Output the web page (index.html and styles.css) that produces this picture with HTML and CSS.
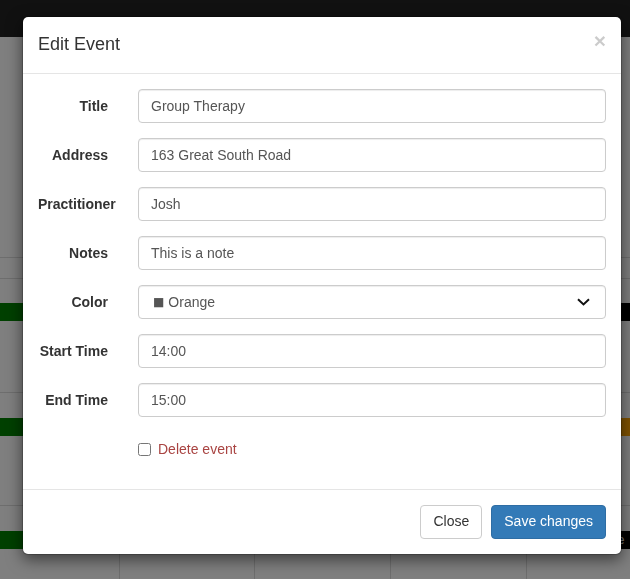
FILE: index.html
```html
<!DOCTYPE html>
<html lang="en">
<head>
<meta charset="utf-8">
<title>Edit Event</title>
<link rel="stylesheet" href="styles.css">
</head>
<body>
<div class="page">
  <div class="navbar"></div>
  <div class="calendar">
    <div class="cal-row row-a">
      <div class="cell"></div><div class="cell"></div><div class="cell"></div><div class="cell"></div><div class="cell"></div>
    </div>
    <div class="cal-row row-b">
      <div class="cell"></div><div class="cell"></div><div class="cell"></div><div class="cell"></div><div class="cell"></div>
    </div>
    <div class="cal-row row-c">
      <div class="cell"><div class="event ev-green"></div></div>
      <div class="cell"></div><div class="cell"></div><div class="cell"></div>
      <div class="cell"><div class="event ev-black"></div></div>
    </div>
    <div class="cal-row row-d">
      <div class="cell"><div class="event ev-green"></div></div>
      <div class="cell"></div><div class="cell"></div><div class="cell"></div>
      <div class="cell"><div class="event ev-orange"></div></div>
    </div>
    <div class="cal-row row-e">
      <div class="cell"><div class="event ev-green"></div></div>
      <div class="cell"></div><div class="cell"></div><div class="cell"></div>
      <div class="cell"><div class="event ev-black ev-label">Review Due date</div></div>
    </div>
  </div>
</div>

<div class="backdrop"></div>

<div class="modal">
  <div class="modal-header">
    <button class="close" type="button">×</button>
    <h4 class="modal-title">Edit Event</h4>
  </div>
  <div class="modal-body">
    <form class="form">
      <div class="form-group">
        <label class="control-label">Title</label>
        <input class="form-control" type="text" value="Group Therapy">
      </div>
      <div class="form-group">
        <label class="control-label">Address</label>
        <input class="form-control" type="text" value="163 Great South Road">
      </div>
      <div class="form-group">
        <label class="control-label">Practitioner</label>
        <input class="form-control" type="text" value="Josh">
      </div>
      <div class="form-group">
        <label class="control-label">Notes</label>
        <input class="form-control" type="text" value="This is a note">
      </div>
      <div class="form-group">
        <label class="control-label">Color</label>
        <div class="form-control select" role="combobox" tabindex="0">
          <span class="swatch">■</span><span class="select-text">Orange</span>
          <svg class="chevron" width="13" height="8" viewBox="0 0 13 8"><path d="M1 1.2 L6.5 6.4 L12 1.2" fill="none" stroke="#111" stroke-width="2"/></svg>
        </div>
      </div>
      <div class="form-group">
        <label class="control-label">Start Time</label>
        <input class="form-control" type="text" value="14:00">
      </div>
      <div class="form-group">
        <label class="control-label">End Time</label>
        <input class="form-control" type="text" value="15:00">
      </div>
      <div class="form-group check-group">
        <span></span>
        <label class="checkbox"><input type="checkbox" class="check"><span class="text-danger">Delete event</span></label>
      </div>
    </form>
  </div>
  <div class="modal-footer">
    <button class="btn btn-default" type="button">Close</button>
    <button class="btn btn-primary" type="button">Save changes</button>
  </div>
</div>
</body>
</html>
```

FILE: styles.css
```css
* { box-sizing: border-box; }

html, body {
  margin: 0;
  padding: 0;
  height: 100%;
  overflow: hidden;
}

body {
  font-family: "Liberation Sans", Arial, sans-serif;
  font-size: 14px;
  line-height: 1.42857;
  color: #333;
  background: #fff;
}

.navbar {
  height: 37px;
  background: #222;
}

.calendar {
  display: flex;
  flex-direction: column;
}

.cal-row {
  display: grid;
  grid-template-columns: 120px 135px 136px 136px 1fr;
  border-bottom: 1px solid #ddd;
}

.row-a { height: 221px; }
.row-b { height: 21px; }
.row-c { height: 114px; }
.row-d { height: 113px; }
.row-e { height: 73px; border-bottom: 0; }

.cell {
  border-right: 1px solid #ddd;
  padding-top: 24px;
}
.cell:last-child { border-right: 0; }

.row-a .cell, .row-b .cell { padding-top: 0; }
.row-d .cell, .row-e .cell { padding-top: 25px; }

.event {
  height: 18px;
  font-size: 12px;
  line-height: 18px;
  padding-left: 4px;
  white-space: nowrap;
  overflow: hidden;
}
.ev-green { background: #008000; }
.ev-black { background: #000; }
.ev-orange { background: #ffa500; }
.ev-label { color: #fff; padding-left: 6px; }

.backdrop {
  position: fixed;
  inset: 0;
  background: rgba(0, 0, 0, 0.5);
}

.modal {
  position: absolute;
  left: 22px;
  top: 16px;
  width: 600px;
  background: #fff;
  border: 1px solid rgba(0, 0, 0, 0.2);
  border-radius: 6px;
  box-shadow: 0 5px 15px rgba(0, 0, 0, 0.5);
  background-clip: padding-box;
}

.modal-header {
  padding: 15px;
  border-bottom: 1px solid #e5e5e5;
}

.modal-title {
  margin: 0;
  font-size: 18px;
  font-weight: 500;
  line-height: 1.42857;
  color: #333;
}

.close {
  float: right;
  margin-top: -2px;
  padding: 0;
  border: 0;
  background: transparent;
  font-family: "Liberation Sans", Arial, sans-serif;
  font-size: 21px;
  font-weight: bold;
  line-height: 1;
  color: #000;
  text-shadow: 0 1px 0 #fff;
  opacity: 0.2;
}

.modal-body {
  padding: 15px;
}

.form {
  margin: 0;
}

.form-group {
  display: grid;
  grid-template-columns: 100px 1fr;
  margin-bottom: 15px;
}

.control-label {
  padding-top: 7px;
  padding-right: 30px;
  text-align: right;
  font-weight: bold;
  line-height: 20px;
  color: #333;
  white-space: nowrap;
}

.form-control {
  display: block;
  width: 100%;
  height: 34px;
  padding: 6px 12px;
  font-family: "Liberation Sans", Arial, sans-serif;
  font-size: 14px;
  line-height: 1.42857;
  color: #555;
  background: #fff;
  border: 1px solid #ccc;
  border-radius: 4px;
  box-shadow: inset 0 1px 1px rgba(0, 0, 0, 0.075);
  outline: none;
}

.select {
  display: flex;
  align-items: center;
  line-height: 20px;
}

.swatch {
  font-family: "DejaVu Sans", sans-serif;
  font-size: 12px;
  line-height: 20px;
  color: #555;
  margin-left: 2px;
  margin-right: 4px;
}

.select-text {
  flex: 1;
}

.chevron {
  flex: none;
  margin-right: 3px;
}

.check-group {
  margin-bottom: 15px;
}

.checkbox {
  display: flex;
  align-items: flex-start;
  min-height: 27px;
  padding-top: 7px;
  line-height: 20px;
  font-weight: normal;
}

.check {
  width: 13px;
  height: 13px;
  margin: 4px 7px 0 0;
  flex: none;
}

.text-danger {
  color: #a94442;
}

.modal-footer {
  display: flex;
  justify-content: flex-end;
  gap: 9px;
  padding: 15px;
  border-top: 1px solid #e5e5e5;
}

.btn {
  height: 34px;
  padding: 6px 12px;
  font-family: "Liberation Sans", Arial, sans-serif;
  font-size: 14px;
  line-height: 1.42857;
  border: 1px solid transparent;
  border-radius: 4px;
  cursor: pointer;
}

.btn-default {
  color: #333;
  background: #fff;
  border-color: #ccc;
}

.btn-primary {
  color: #fff;
  background: #337ab7;
  border-color: #2e6da4;
}
```
